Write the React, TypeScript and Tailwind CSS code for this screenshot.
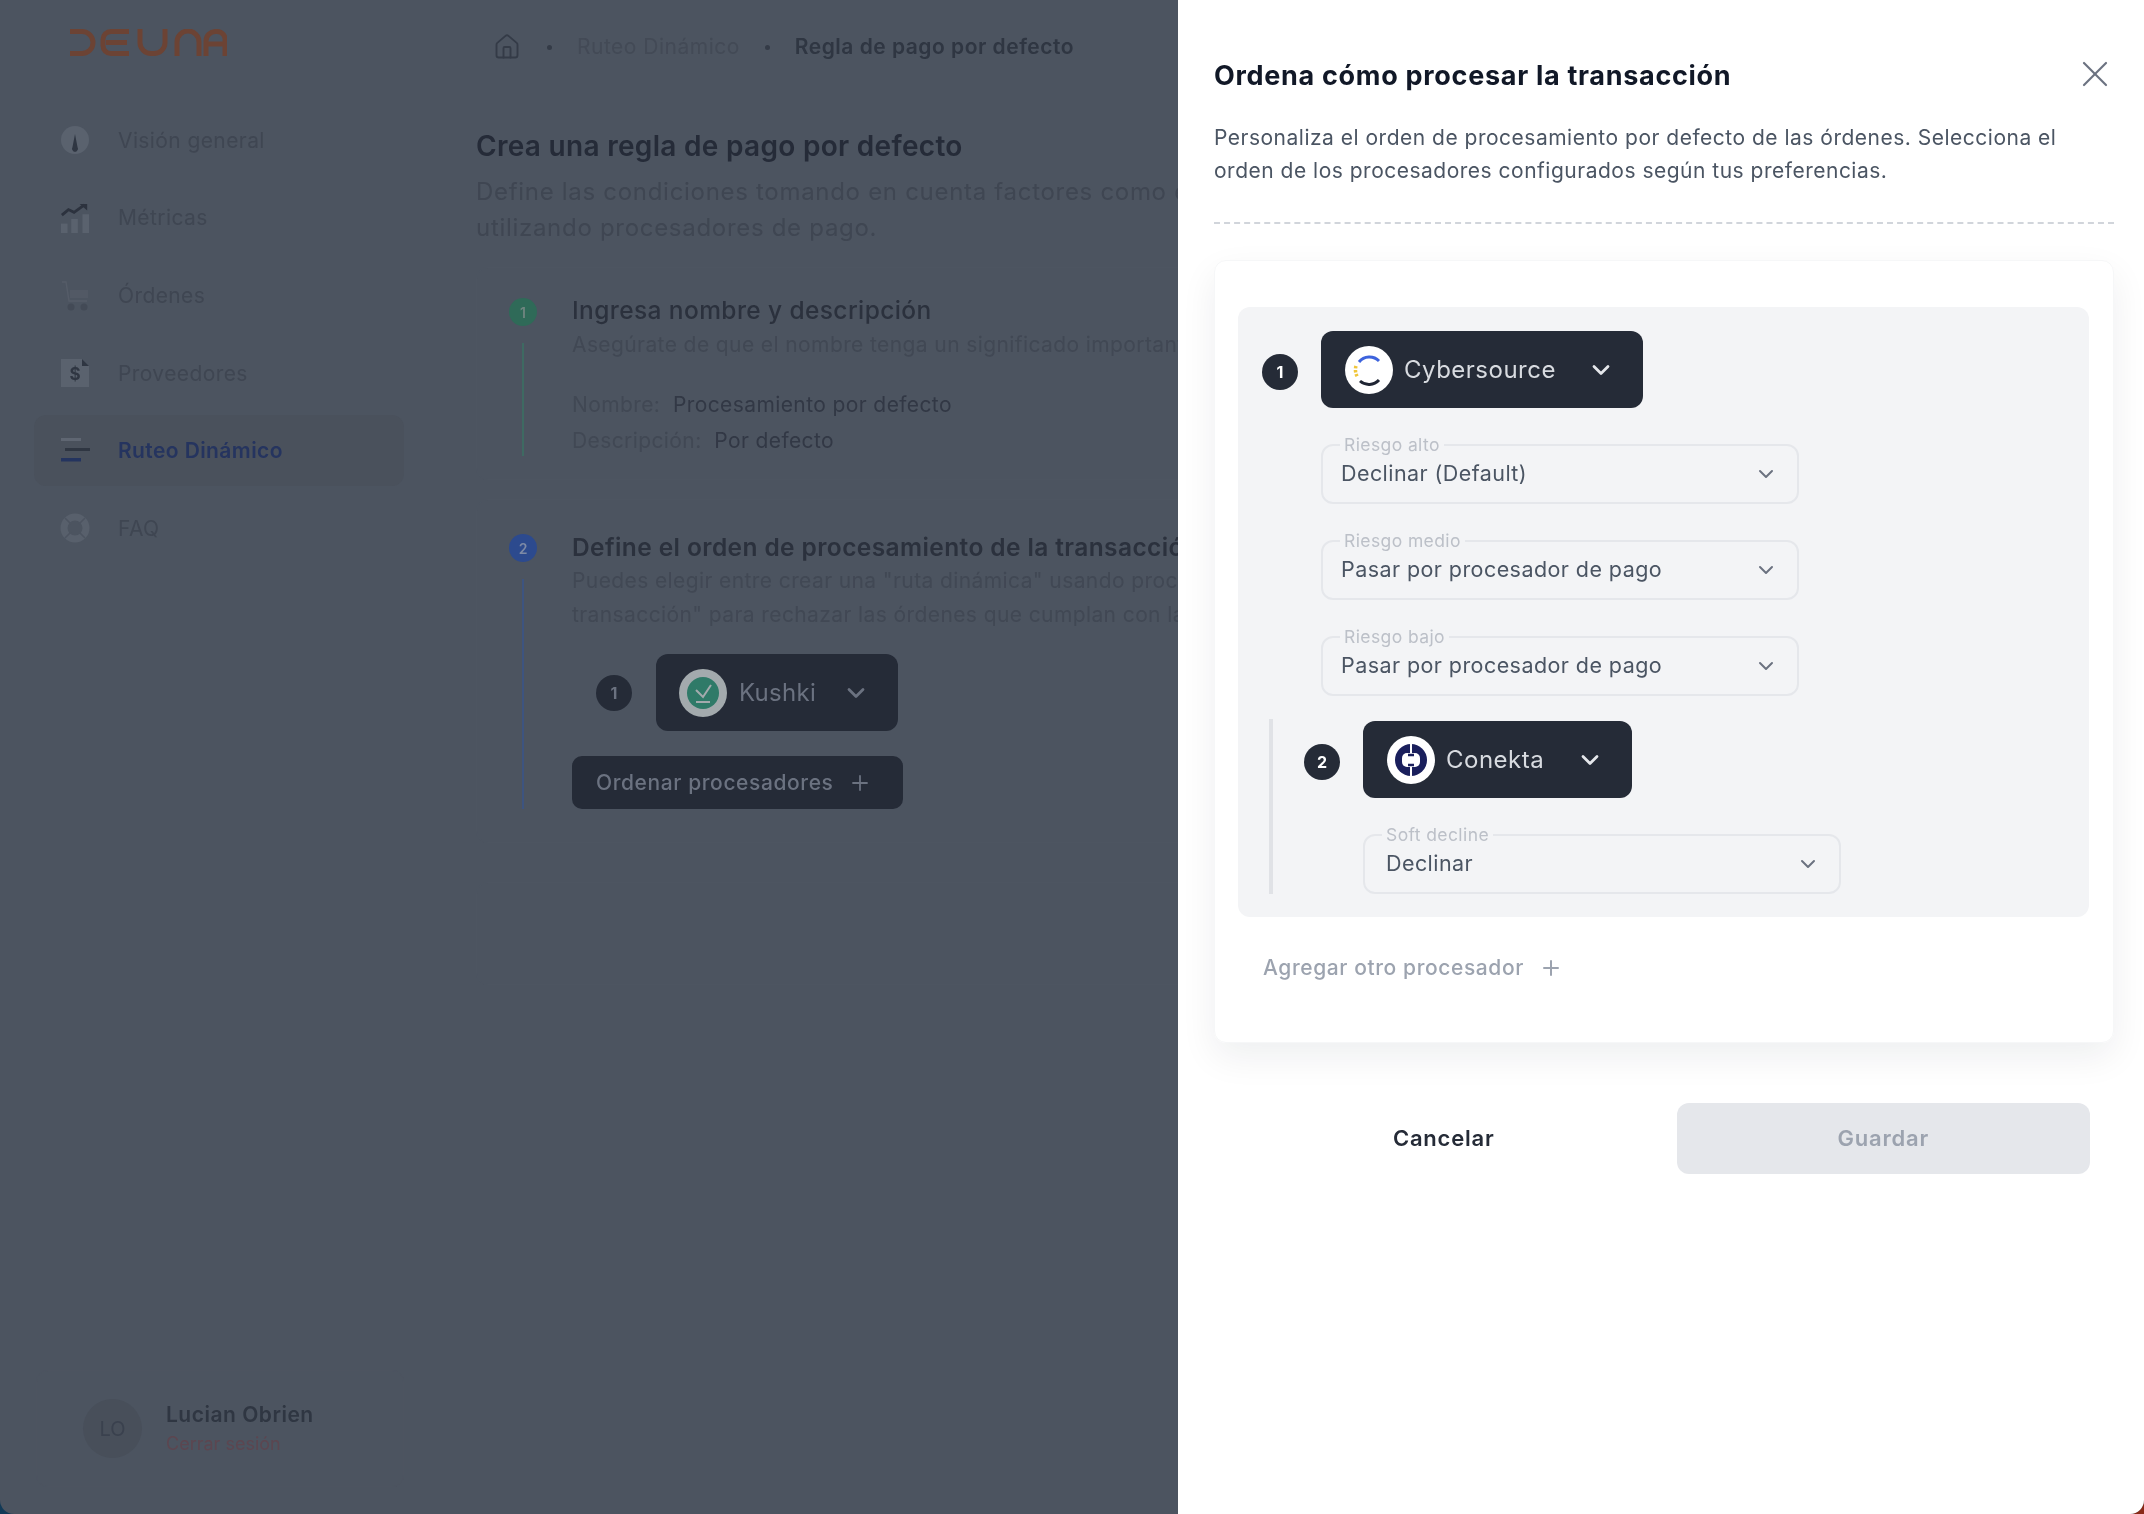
import { ChevronDown, House, Plus, X } from "lucide-react";
import type { ReactNode } from "react";

const navItems = [
  { label: "Visión general", icon: <GaugeIcon /> },
  { label: "Métricas", icon: <ChartIcon /> },
  { label: "Órdenes", icon: <CartIcon /> },
  { label: "Proveedores", icon: <InvoiceIcon /> },
  { label: "Ruteo Dinámico", icon: <RouteIcon />, active: true },
  { label: "FAQ", icon: <BuoyIcon /> },
];

function GaugeIcon() {
  return (
    <svg viewBox="0 0 30 30" className="h-[30px] w-[30px]">
      <circle cx="15" cy="14" r="14" fill="#5a626e" />
      <path d="M15 8 L17.5 21 A3 3 0 1 1 12.5 21 Z" fill="#2f3642" />
    </svg>
  );
}

function ChartIcon() {
  return (
    <svg viewBox="0 0 32 32" className="h-[32px] w-[32px]">
      <path d="M2 13 L9 7 L15 10 L26 2" fill="none" stroke="#2c323e" strokeWidth="3" />
      <path d="M21 1 H29 V8 Z" fill="#2c323e" />
      <rect x="1" y="22" width="7" height="10" fill="#5a626e" />
      <rect x="12" y="17" width="7" height="15" fill="#5a626e" />
      <rect x="24" y="12" width="7" height="20" fill="#5a626e" />
    </svg>
  );
}

function CartIcon() {
  return (
    <svg viewBox="0 0 30 30" className="h-[30px] w-[30px]">
      <path d="M2 1 H6 L9 20 H27" fill="none" stroke="#555c68" strokeWidth="1.5" />
      <rect x="10" y="9" width="18" height="8" fill="#525965" />
      <circle cx="11" cy="26" r="3.5" fill="#434a56" />
      <circle cx="24" cy="26" r="3.5" fill="#434a56" />
    </svg>
  );
}

function InvoiceIcon() {
  return (
    <svg viewBox="0 0 30 30" className="h-[30px] w-[30px]">
      <path d="M1 1 H22 L29 8 V29 H1 Z" fill="#5a626e" />
      <path d="M22 1 L29 8 H22 Z" fill="#2f3642" />
      <text x="15" y="22" textAnchor="middle" fontSize="17" fontWeight="700" fontFamily="Inter, sans-serif" fill="#2f3642">$</text>
    </svg>
  );
}

function RouteIcon() {
  return (
    <svg viewBox="0 0 30 26" className="h-[26px] w-[30px]">
      <rect x="1" y="0" width="20" height="3" fill="#5f6672" />
      <rect x="5" y="10" width="25" height="3" fill="#2f3642" />
      <rect x="1" y="20" width="20" height="3.5" fill="#24345f" />
    </svg>
  );
}

function BuoyIcon() {
  return (
    <svg viewBox="0 0 30 30" className="h-[30px] w-[30px]">
      <circle cx="15" cy="15" r="11" fill="none" stroke="#58606c" strokeWidth="7" />
      <path d="M5 5 L11 11 M25 5 L19 11 M5 25 L11 19 M25 25 L19 19" stroke="#4c5460" strokeWidth="1.5" />
    </svg>
  );
}

function DeunaLogo() {
  return (
    <svg viewBox="0 0 158 27" className="h-[27px] w-[158px]" fill="none" stroke="#6c4334" strokeWidth="5">
      <path d="M1 2.5 H13 A11 11 0 0 1 13 24.5 H1" />
      <path d="M60 2.5 H42 A8 8 0 0 0 34 10.5 V16.5 A8 8 0 0 0 42 24.5 H60 M37 13.5 H58" />
      <path d="M71 0 V14 A11 11 0 0 0 82 24.5 H85 A11 11 0 0 0 96 14 V0" />
      <path d="M108 27 V13 A10.500 10.500 0 0 1 130 13 V27" />
      <path d="M137 27 V12 A9.500 9.500 0 0 1 147 2.500 H148 A8 8 0 0 1 156 12 V27 M139 15 H155" />
    </svg>
  );
}

function CybersourceLogo() {
  return (
    <svg viewBox="0 0 48 48" className="h-full w-full">
      <circle cx="24" cy="24" r="24" fill="#fff" />
      <path d="M14 16 A13.500 13.500 0 0 1 34 15" fill="none" stroke="#3d63dd" strokeWidth="3" />
      <path d="M11 20 A13.500 13.500 0 0 0 12.500 31" fill="none" stroke="#f0c63a" strokeWidth="3.500" strokeDasharray="2.500 1.500" />
      <path d="M15 35 A13.500 13.500 0 0 0 34 34" fill="none" stroke="#1f2533" strokeWidth="3" />
    </svg>
  );
}

function ConektaLogo() {
  return (
    <svg viewBox="0 0 48 48" className="h-full w-full">
      <circle cx="24" cy="24" r="24" fill="#fff" />
      <circle cx="24" cy="24" r="16" fill="#1a1f5c" />
      <rect x="15" y="17" width="18" height="14" rx="5" fill="#fff" />
      <path d="M24 7 V19 M24 29 V41" stroke="#fff" strokeWidth="2" />
      <path d="M21 19 H27 M21 29 H27" stroke="#1a1f5c" strokeWidth="2.500" />
    </svg>
  );
}

function KushkiLogo() {
  return (
    <svg viewBox="0 0 48 48" className="h-full w-full">
      <circle cx="24" cy="24" r="24" fill="#a3aaad" />
      <circle cx="24" cy="24" r="16" fill="#2f7a68" />
      <path d="M17 21 L24 28 L32 16 M17 33 H31" fill="none" stroke="#a3aaad" strokeWidth="2" />
    </svg>
  );
}

function NumberBadge({ n, className }: { n: number; className: string }) {
  return (
    <span className={`flex h-[36px] w-[36px] shrink-0 items-center justify-center rounded-full text-[16px] font-bold ${className}`}>
      {n}
    </span>
  );
}

function ProcessorButton({ name, logo, className }: { name: string; logo: ReactNode; className: string }) {
  return (
    <button type="button" className={`flex h-[77px] shrink-0 items-center justify-between rounded-[12px] bg-[#252b37] pl-[24px] pr-[28px] ${className}`}>
      <span className="flex items-center gap-[11px]">
        <span className="block h-[48px] w-[48px] shrink-0">{logo}</span>
        <span className="text-[24px] tracking-[0.5px] text-[#d8dbe0]">{name}</span>
      </span>
      <ChevronDown className="h-[28px] w-[28px] text-[#e5e7eb]" strokeWidth={2.4} />
    </button>
  );
}

function RiskSelect({ label, value, valueClass = "" }: { label: string; value: string; valueClass?: string }) {
  return (
    <div className="relative flex h-[60px] w-[478px] items-center justify-between rounded-[12px] border-2 border-[#e5e7eb] pl-[18px] pr-[19px]">
      <span className="absolute -top-[12px] left-[17px] bg-[#f3f4f6] px-[4px] text-[17.500px] leading-[22px] tracking-[0.4px] text-[#bcc0c8]">{label}</span>
      <span className={`-mt-[2px] text-[21.500px] leading-[30px] tracking-[0.43px] text-[#4b5563] ${valueClass}`}>{value}</span>
      <ChevronDown className="h-[24px] w-[24px] text-[#6b7280]" strokeWidth={2} />
    </div>
  );
}

function Sidebar() {
  return (
    <aside className="flex h-full w-[440px] shrink-0 flex-col">
      <div className="h-[105px] pl-[69px] pt-[29px]">
        <DeunaLogo />
      </div>
      <nav className="flex flex-col gap-[6.600px] pl-[34px] pr-[36px]">
        {navItems.map((item) => (
          <div
            key={item.label}
            className={`flex h-[71px] items-center rounded-[12px] pl-[26px] ${item.active ? "bg-[#4a515c]" : ""}`}
          >
            <span className="flex w-[30px] shrink-0 items-center justify-center">{item.icon}</span>
            <span className={`ml-[28px] text-[21px] tracking-[0.4px] ${item.active ? "font-semibold text-[#25345f]" : "text-[#3f4652]"}`}>
              {item.label}
            </span>
          </div>
        ))}
      </nav>
      <div className="mx-[36px] mb-[27px] mt-auto flex h-[117px] items-center rounded-[12px] border border-[#4d5460] pl-[46px]">
        <span className="flex h-[59px] w-[59px] items-center justify-center rounded-full bg-[#484f5a] text-[20px] text-[#3a414e]">LO</span>
        <div className="ml-[24px] flex flex-col pt-[2px]">
          <span className="text-[21px] font-semibold leading-[28px] tracking-[0.5px] text-[#2f3642]">Lucian Obrien</span>
          <span className="text-[18px] leading-[30px] text-[#5c4650]">Cerrar sesión</span>
        </div>
      </div>
    </aside>
  );
}

function MainContent() {
  return (
    <main className="w-[738px] shrink-0 overflow-hidden pl-[36px] whitespace-nowrap">
      <div className="flex h-[94px] items-center pl-[17px] text-[21px] tracking-[0.5px]">
        <House className="h-[28px] w-[28px] text-[#343b47]" strokeWidth={1.6} />
        <span className="ml-[26px] h-[5px] w-[5px] rounded-full bg-[#343b47]" />
        <span className="ml-[25px] text-[#434a56]">Ruteo Dinámico</span>
        <span className="ml-[25px] h-[5px] w-[5px] rounded-full bg-[#343b47]" />
        <span className="ml-[25px] font-semibold text-[#2f3642]">Regla de pago por defecto</span>
      </div>

      <h1 className="mt-[34px] text-[28px] font-semibold leading-[36px] tracking-[0.3px] text-[#252b38]">Crea una regla de pago por defecto</h1>
      <p className="mt-[10px] text-[24px] leading-[36px] tracking-[0.7px] text-[#3f4652]">
        Define las condiciones tomando en cuenta factores como el riesgo, la moneda y otros,
        <br />
        utilizando procesadores de pago.
      </p>

      <section className="mt-[21px] flex h-[213px] w-[1100px] rounded-[12px] border border-[#4d5561] pl-[32px] pt-[27px]">
        <div className="flex w-[28px] shrink-0 flex-col items-center pt-[3px]">
          <span className="flex h-[28px] w-[28px] items-center justify-center rounded-full bg-[#2f6a58] text-[14px] font-semibold text-[#6f8580]">1</span>
          <span className="mt-[17px] h-[113px] w-[2px] bg-[#3e6a62]" />
        </div>
        <div className="ml-[35px]">
          <h2 className="text-[24.500px] font-medium leading-[30px] tracking-[0.4px] text-[#2b313d]">Ingresa nombre y descripción</h2>
          <p className="mt-[5px] text-[21px] leading-[30px] tracking-[0.4px] text-[#414854]">Asegúrate de que el nombre tenga un significado importante para ti</p>
          <p className="mt-[27px] text-[21px] leading-[36px] tracking-[0.4px] text-[#414854]">
            Nombre:&nbsp; <span className="text-[#323845]">Procesamiento por defecto</span>
          </p>
          <p className="text-[21px] leading-[36px] tracking-[0.4px] text-[#414854]">
            Descripción:&nbsp; <span className="text-[#323845]">Por defecto</span>
          </p>
        </div>
      </section>

      <section className="mt-[19px] flex h-[344px] w-[1100px] rounded-[12px] border border-[#4d5561] pl-[32px] pt-[32px]">
        <div className="flex w-[28px] shrink-0 flex-col items-center pt-[2px]">
          <span className="flex h-[28px] w-[28px] items-center justify-center rounded-full bg-[#2c4a8e] text-[14px] font-semibold text-[#7d8aa6]">2</span>
          <span className="mt-[17px] h-[230px] w-[2px] bg-[#3d5480]" />
        </div>
        <div className="ml-[35px]">
          <h2 className="text-[24.500px] font-semibold leading-[30px] tracking-[0.4px] text-[#2b313d]">Define el orden de procesamiento de la transacción</h2>
          <p className="mt-[2px] text-[21px] leading-[34px] tracking-[0.4px] text-[#414854]">
            Puedes elegir entre crear una "ruta dinámica" usando procesadores o "rechazar la
            <br />
            transacción" para rechazar las órdenes que cumplan con las condiciones.
          </p>
          <div className="ml-[24px] mt-[22px] flex items-center gap-[24px]">
            <NumberBadge n={1} className="bg-[#252b37] text-[#6b7280]" />
            <button type="button" className="flex h-[77px] w-[242px] items-center rounded-[12px] bg-[#252b37] pl-[23px]">
              <span className="block h-[48px] w-[48px]">
                <KushkiLogo />
              </span>
              <span className="ml-[12px] text-[24px] tracking-[0.3px] text-[#6b7280]">Kushki</span>
              <ChevronDown className="ml-[26px] h-[28px] w-[28px] text-[#6b7280]" strokeWidth={2.4} />
            </button>
          </div>
          <button type="button" className="mt-[25px] flex h-[53px] w-[331px] items-center rounded-[10px] bg-[#252b37] pl-[24px]">
            <span className="text-[21px] font-medium tracking-[0.6px] text-[#6b7280]">Ordenar procesadores</span>
            <Plus className="ml-[14px] h-[24px] w-[24px] text-[#6b7280]" strokeWidth={1.8} />
          </button>
        </div>
      </section>

      <section className="mt-[39px] h-[103px] w-[1100px] rounded-[12px] border border-[#4d5561]" />
    </main>
  );
}

function SidePanel() {
  return (
    <aside className="absolute inset-y-0 right-0 w-[966px] bg-white pl-[36px] pr-[30px] pt-[58px] blur-[0.4px]">
      <button type="button" className="absolute right-[27px] top-[52px] text-[#6b7280]" aria-label="Cerrar">
        <X className="h-[44px] w-[44px]" strokeWidth={1.2} />
      </button>
      <h2 className="text-[27px] font-bold leading-[36px] tracking-[0.7px] text-[#111827]">Ordena cómo procesar la transacción</h2>
      <p className="mt-[27px] text-[21px] leading-[33px] tracking-[0.5px] text-[#4b5563]">
        Personaliza el orden de procesamiento por defecto de las órdenes. Selecciona el
        <br />
        orden de los procesadores configurados según tus preferencias.
      </p>
      <div className="mt-[35px] border-t-2 border-dashed border-[#d1d5db]" />

      <div className="mt-[36px] rounded-[12px] border border-[#f6f7f8] pb-[60px] pl-[23px] pr-[24px] pt-[46px] shadow-[0_14px_36px_rgba(17,24,39,0.07)]">
        <div className="rounded-[12px] bg-[#f3f4f6] pb-[23px] pl-[24px] pt-[24px]">
          <div className="flex items-center gap-[23px]">
            <NumberBadge n={1} className="mt-[5px] bg-[#252b37] text-white" />
            <ProcessorButton name="Cybersource" logo={<CybersourceLogo />} className="w-[322px]" />
          </div>
          <div className="ml-[59px] mt-[36px] flex flex-col gap-[36px]">
            <RiskSelect label="Riesgo alto" value="Declinar (Default)" />
            <RiskSelect label="Riesgo medio" value="Pasar por procesador de pago" />
            <RiskSelect label="Riesgo bajo" value="Pasar por procesador de pago" />
          </div>
          <div className="ml-[7px] mt-[23px] border-l-4 border-[#e0e2e6] pl-[31px] pt-[2px]">
            <div className="flex items-center gap-[23px]">
              <NumberBadge n={2} className="mt-[4px] bg-[#252b37] text-white" />
              <ProcessorButton name="Conekta" logo={<ConektaLogo />} className="w-[269px]" />
            </div>
            <div className="ml-[59px] mt-[36px]">
              <RiskSelect label="Soft decline" value="Declinar" valueClass="ml-[3px]" />
            </div>
          </div>
        </div>
        <div className="mt-[37px] flex items-center pl-[25px] text-[#9ca3af]">
          <span className="text-[21px] font-medium leading-[28px] tracking-[0.6px]">Agregar otro procesador</span>
          <Plus className="ml-[15px] h-[24px] w-[24px]" strokeWidth={2} />
        </div>
      </div>

      <div className="ml-[23px] mr-[24px] mt-[60px] grid grid-cols-2 gap-[26px]">
        <button type="button" className="h-[71px] rounded-[12px] text-[22px] font-semibold tracking-[0.8px] text-[#252b37]">Cancelar</button>
        <button type="button" className="h-[71px] rounded-[12px] bg-[#e5e7eb] text-[22px] font-semibold tracking-[0.8px] text-[#9ca3af]">Guardar</button>
      </div>
    </aside>
  );
}

export default function App() {
  return (
    <div className="h-[1514px] w-[2144px] bg-linear-to-r from-[#123a57] to-[#8a2a18] font-['Inter',sans-serif]">
      <div className="relative flex h-full overflow-hidden rounded-b-[14px] bg-[#4c5460]">
        <div className="flex h-full w-full blur-[0.6px]">
          <Sidebar />
          <MainContent />
        </div>
        <SidePanel />
      </div>
    </div>
  );
}
